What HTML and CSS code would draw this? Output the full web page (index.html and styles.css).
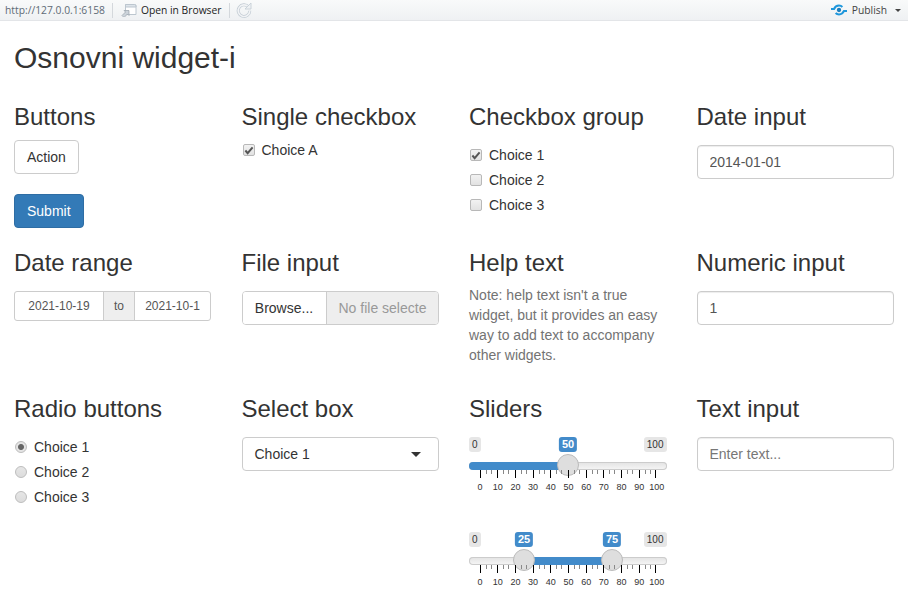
FILE: index.html
```html
<!DOCTYPE html>
<html lang="en">
<head>
    <meta charset="UTF-8">
    <meta name="viewport" content="width=device-width, initial-scale=1.0">
    <title>Osnovni widget-i</title>
    <link rel="stylesheet" href="styles.css">
</head>
<body>

<svg class="defs" width="0" height="0">
    <symbol id="ticks" viewBox="0 0 198 9">
        <path class="minor" d="M17.5 0v4M22.5 0v4M34.5 0v4M39.5 0v4M52.5 0v4M57.5 0v4M70.5 0v4M75.5 0v4M87.5 0v4M92.5 0v4M105.5 0v4M110.5 0v4M123.5 0v4M128.5 0v4M140.5 0v4M145.5 0v4M158.5 0v4M163.5 0v4M176.5 0v4M181.5 0v4"/>
        <path class="major" d="M11.5 0v8M28.5 0v8M46.5 0v8M64.5 0v8M81.5 0v8M99.5 0v8M117.5 0v8M134.5 0v8M152.5 0v8M170.5 0v8M186.5 0v8"/>
    </symbol>
</svg>

<div class="toolbar">
    <span class="url">http://127.0.0.1:6158</span>
    <span class="sep"></span>
    <svg class="open-icon" width="16" height="14" viewBox="0 0 16 14">
        <path d="M4.500 1.500h9a1.500 1.500 0 0 1 1.500 1.500v8.500h-10.500z" fill="#fff" stroke="#bcc6cf"/>
        <path d="M4.500 1.500h9a1.500 1.500 0 0 1 1.500 1.500v1h-10.500z" fill="#dde4ea" stroke="#bcc6cf"/>
        <path d="M1 12.500l3.500-3.500-1.500-1.500h5v5l-1.500-1.500-3.500 3.500z" fill="#ccd3da" stroke="#98a2ab" stroke-width=".7"/>
    </svg>
    <span class="open-text">Open in Browser</span>
    <span class="sep"></span>
    <svg class="reload-icon" width="16" height="16" viewBox="0 0 16 16">
        <path d="M12.500 5a5.800 5.800 0 1 0 1.300 3.800" fill="none" stroke="#c2cbd3" stroke-width="3"/>
        <path d="M12.500 5a5.800 5.800 0 1 0 1.300 3.800" fill="none" stroke="#f1f3f5" stroke-width="1.600"/>
        <path d="M9 7h6v-6z" fill="#eef1f3" stroke="#c2cbd3" stroke-width=".8"/>
    </svg>
    <span class="publish">
        <svg width="16" height="12" viewBox="0 0 17 12">
            <path d="M0 5h3.200C4.200 2.600 6 1.300 8.500 1.300c1.500 0 2.700.5 3.600 1.400" fill="none" stroke="#1f97dc" stroke-width="2.200"/>
            <path d="M17 7h-3.200c-1 2.400-2.800 3.700-5.300 3.700-1.500 0-2.700-.5-3.600-1.400" fill="none" stroke="#1f97dc" stroke-width="2.200"/>
            <circle cx="8.500" cy="6" r="2.300" fill="#1c7fbd"/>
        </svg>
        <span class="publish-text">Publish</span>
        <span class="caret-small"></span>
    </span>
</div>

<div class="container">
    <h2>Osnovni widget-i</h2>

    <div class="row">
        <div class="col">
            <h3>Buttons</h3>
            <button class="btn">Action</button>
            <button class="btn btn-primary">Submit</button>
        </div>
        <div class="col">
            <h3>Single checkbox</h3>
            <label class="choice"><span class="check on"><svg width="10" height="9" viewBox="0 0 11 10"><path d="M1.500 5l2.500 3 5.500-6.500" fill="none" stroke="#555" stroke-width="2.200"/></svg></span>Choice A</label>
        </div>
        <div class="col">
            <h3>Checkbox group</h3>
            <div class="choices">
                <label class="choice"><span class="check on"><svg width="10" height="9" viewBox="0 0 11 10"><path d="M1.500 5l2.500 3 5.500-6.500" fill="none" stroke="#555" stroke-width="2.200"/></svg></span>Choice 1</label>
                <label class="choice"><span class="check"></span>Choice 2</label>
                <label class="choice"><span class="check"></span>Choice 3</label>
            </div>
        </div>
        <div class="col">
            <h3>Date input</h3>
            <input class="form-control offset" type="text" value="2014-01-01">
        </div>
    </div>

    <div class="row">
        <div class="col">
            <h3>Date range</h3>
            <div class="date-range offset">
                <span class="date-value from">2021-10-19</span>
                <span class="date-to">to</span>
                <span class="date-value">2021-10-1</span>
            </div>
        </div>
        <div class="col">
            <h3>File input</h3>
            <div class="file-input offset">
                <span class="browse">Browse...</span>
                <span class="file-name">No file selecte</span>
            </div>
        </div>
        <div class="col">
            <h3>Help text</h3>
            <p class="help">Note: help text isn't a true widget, but it provides an easy way to add text to accompany other widgets.</p>
        </div>
        <div class="col">
            <h3>Numeric input</h3>
            <input class="form-control offset" type="text" value="1">
        </div>
    </div>

    <div class="row">
        <div class="col">
            <h3>Radio buttons</h3>
            <div class="choices">
                <label class="choice"><span class="radio on"></span>Choice 1</label>
                <label class="choice"><span class="radio"></span>Choice 2</label>
                <label class="choice"><span class="radio"></span>Choice 3</label>
            </div>
        </div>
        <div class="col">
            <h3>Select box</h3>
            <div class="select offset">Choice 1<span class="caret"></span></div>
        </div>
        <div class="col">
            <h3>Sliders</h3>
            <div class="slider offset">
                <span class="bubble min">0</span>
                <span class="bubble max">100</span>
                <span class="bubble value" style="left: 99px">50</span>
                <div class="track">
                    <div class="fill" style="left: 0; width: 99px"></div>
                </div>
                <span class="handle" style="left: 99px"></span>
                <svg class="ticks"><use href="#ticks"/></svg>
                <div class="grid-text"><span>0</span><span>10</span><span>20</span><span>30</span><span>40</span><span>50</span><span>60</span><span>70</span><span>80</span><span>90</span><span>100</span></div>
            </div>
            <div class="slider second">
                <span class="bubble min">0</span>
                <span class="bubble max">100</span>
                <span class="bubble value" style="left: 55px">25</span>
                <span class="bubble value" style="left: 143px">75</span>
                <div class="track">
                    <div class="fill" style="left: 55px; width: 88px"></div>
                </div>
                <span class="handle" style="left: 55px"></span>
                <span class="handle" style="left: 143px"></span>
                <svg class="ticks"><use href="#ticks"/></svg>
                <div class="grid-text"><span>0</span><span>10</span><span>20</span><span>30</span><span>40</span><span>50</span><span>60</span><span>70</span><span>80</span><span>90</span><span>100</span></div>
            </div>
        </div>
        <div class="col">
            <h3>Text input</h3>
            <input class="form-control offset" type="text" placeholder="Enter text...">
        </div>
    </div>
</div>

</body>
</html>
```

FILE: styles.css
```css
* {
    box-sizing: border-box;
}

body {
    font-family: 'Liberation Sans', Arial, sans-serif;
    font-size: 14px;
    line-height: 20px;
    color: #333;
    background: #fff;
    margin: 0;
    overflow: hidden;
}

.defs {
    display: block;
    height: 0;
}

.toolbar {
    display: flex;
    align-items: center;
    height: 21px;
    padding-left: 5px;
    background: linear-gradient(to bottom, #f9fafa, #eff1f3);
    border-bottom: 1px solid #e3e5e8;
    font-family: 'Open Sans', sans-serif;
    font-size: 10.3px;
    white-space: nowrap;
}

.url {
    color: #5f6b76;
}

.sep {
    width: 1px;
    height: 15px;
    margin: 0 8px 0 7px;
    background: #d4d8dc;
}

.open-icon {
    margin-right: 4px;
}

.open-text {
    color: #222;
}

.reload-icon {
    margin-left: -2px;
}

.publish {
    display: flex;
    align-items: center;
    margin-left: auto;
    padding-right: 7px;
}

.publish-text {
    margin-left: 5px;
    color: #444;
}

.caret-small {
    width: 0;
    height: 0;
    margin-left: 8px;
    border: 3px solid transparent;
    border-top: 3px solid #444;
    border-bottom: 0;
}

.container {
    padding: 0 14px;
}

h2 {
    font-size: 30px;
    font-weight: 500;
    line-height: 33px;
    margin: 20px 0 10px;
}

h3 {
    font-size: 24px;
    font-weight: 500;
    line-height: 26.4px;
    margin: 20px 0 10px;
}

.row {
    display: grid;
    grid-template-columns: repeat(4, 197.5px);
    column-gap: 30px;
}

/* h3 margin collapses with this one, so 15 gives 5px below the 10 */
.offset {
    margin-top: 15px;
}

.btn {
    display: block;
    height: 34px;
    padding: 6px 12px;
    border: 1px solid #ccc;
    border-radius: 4px;
    background: #fff;
    color: #333;
    font: inherit;
}

.btn-primary {
    margin-top: 20px;
    background: #337ab7;
    border-color: #2e6da4;
    color: #fff;
}

.choices {
    display: flex;
    flex-direction: column;
    gap: 5px;
    padding-top: 5px;
    margin-bottom: 14.6px;
}

.choice {
    display: flex;
    align-items: center;
    height: 20px;
}

.check {
    display: flex;
    align-items: center;
    justify-content: center;
    width: 12px;
    height: 12px;
    margin-left: 1px;
    margin-right: 7px;
    border: 1px solid #b8b8b8;
    border-radius: 2px;
    background: linear-gradient(to bottom, #f2f2f2, #e2e2e2);
}

.radio {
    width: 12px;
    height: 12px;
    margin-left: 1px;
    margin-right: 7px;
    border: 1px solid #bdbdbd;
    border-radius: 50%;
    background: linear-gradient(to bottom, #e6e6e6, #dcdcdc);
}

.radio.on {
    background: radial-gradient(circle, #666 0, #666 2.500px, #e4e4e4 3.500px);
}

.form-control {
    display: block;
    width: 100%;
    height: 34px;
    padding: 6px 12px;
    border: 1px solid #ccc;
    border-radius: 4px;
    font: inherit;
    color: #555;
    box-shadow: inset 0 1px 1px rgba(0, 0, 0, 0.075);
}

.form-control::placeholder {
    color: #777;
    opacity: 1;
}

.date-range {
    display: flex;
    width: 197px;
    height: 30px;
    border: 1px solid #ccc;
    border-radius: 3px;
    font-size: 12px;
    line-height: 28px;
    color: #555;
}

.date-value {
    flex: 1;
    text-align: center;
}

.date-value.from {
    flex: none;
    width: 88px;
}

.date-to {
    width: 32px;
    text-align: center;
    background: #eee;
    border-left: 1px solid #ccc;
    border-right: 1px solid #ccc;
}

.file-input {
    display: flex;
    height: 34px;
    line-height: 32px;
    border: 1px solid #ccc;
    border-radius: 4px;
    overflow: hidden;
}

.browse {
    width: 84px;
    text-align: center;
    background: #fff;
    border-right: 1px solid #ccc;
}

.file-name {
    flex: 1;
    padding-left: 12px;
    background: #eee;
    color: #999;
    white-space: nowrap;
}

.help {
    margin: -1px 0 10.6px;
    color: #737373;
}

.select {
    position: relative;
    height: 34px;
    padding: 6px 12px;
    border: 1px solid #ccc;
    border-radius: 4px;
}

.caret {
    position: absolute;
    right: 17px;
    top: 14px;
    border: 5px solid transparent;
    border-top: 5px solid #333;
    border-bottom: 0;
}

.slider {
    position: relative;
    height: 70px;
}

.slider.second {
    margin-top: 25px;
}

.bubble {
    position: absolute;
    top: 0;
    padding: 0 3px;
    border-radius: 3px;
    font-size: 10px;
    line-height: 15px;
    background: #e6e6e6;
}

.bubble.min {
    left: 0;
}

.bubble.max {
    right: 0;
}

.bubble.value {
    transform: translateX(-50%);
    padding: 0 3px;
    background: #428bca;
    color: #fff;
    font-size: 11px;
    font-weight: bold;
}

.track {
    position: absolute;
    left: 0;
    right: 0;
    top: 25px;
    height: 8px;
    border-radius: 4px;
    background: linear-gradient(to bottom, #e2e2e2, #f7f7f7);
    box-shadow: inset 0 0 0 1px #ccc;
    overflow: hidden;
}

.fill {
    position: absolute;
    top: 0;
    bottom: 0;
    background: #428bca;
}

.handle {
    position: absolute;
    top: 17px;
    width: 22px;
    height: 22px;
    margin-left: -11px;
    border: 1px solid #bbb;
    border-radius: 50%;
    background: #dedede;
}

.ticks {
    position: absolute;
    left: 0;
    top: 33px;
    width: 198px;
    height: 9px;
}

.minor {
    stroke: #888;
    stroke-width: 1;
}

.major {
    stroke: #000;
    stroke-width: 1;
}

.grid-text {
    position: absolute;
    left: 11px;
    width: 177px;
    top: 44px;
    display: flex;
    justify-content: space-between;
    font-size: 9px;
    line-height: 12px;
}

.grid-text span {
    width: 0;
    display: flex;
    justify-content: center;
}
```
